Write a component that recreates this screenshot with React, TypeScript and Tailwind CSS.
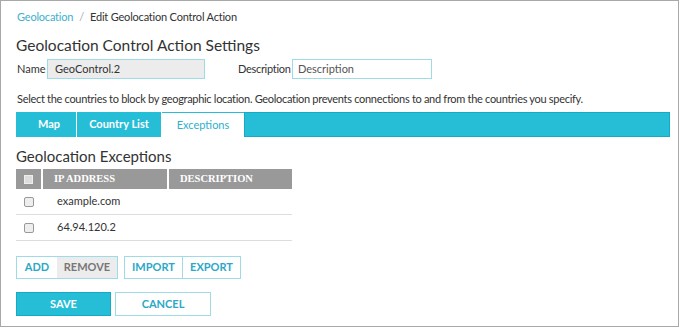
export default function App() {
  const rows = ['example.com', '64.94.120.2'];
  const serif = { fontFamily: '"Liberation Serif", serif' };

  return (
    <div className="w-[680px] h-[328px] bg-white" style={{ fontFamily: 'Lato, sans-serif' }}>
      <div className="w-[679px] h-[327px] border border-[#a8a8a8] pl-[15px] pt-[8px] text-[#333]">
        <div className="flex items-center gap-[6px] text-[11px] leading-[16px] ml-[1px] tracking-[-0.2px]">
          <span className="text-[#3cb0cc]">Geolocation</span>
          <span className="text-[#aaa]">/</span>
          <span className="text-[#333]">Edit Geolocation Control Action</span>
        </div>

        <h1 className="mt-[10px] text-[15.5px] leading-[20px] text-[#333]">Geolocation Control Action Settings</h1>

        <div className="mt-[4px] flex items-center text-[11px]">
          <span className="ml-[1px] w-[30px]">Name</span>
          <div className="w-[158px] h-[20px] bg-[#ececec] border border-[#9fdbe7] flex items-center pl-[7px]">
            GeoControl.2
          </div>
          <span className="ml-[33px] w-[54px] tracking-[-0.3px]">Description</span>
          <div className="w-[140px] h-[20px] bg-white border border-[#9fdbe7] flex items-center pl-[5px] text-[#555]">
            Description
          </div>
        </div>

        <p className="mt-[12px] text-[11px] leading-[16px] ml-[1px] tracking-[-0.3px]">
          Select the countries to block by geographic location. Geolocation prevents connections to and from the countries you specify.
        </p>

        <div className="mt-[5px] flex w-[654px] h-[25px] bg-[#26bdd7]">
          <div className="w-[61px] flex items-center justify-center text-white text-[11px] font-bold border-r border-white pl-[6px]">Map</div>
          <div className="w-[85px] flex items-center justify-center text-white text-[11px] font-bold border-r border-white">Country List</div>
          <div className="w-[82px] flex items-center justify-center bg-white text-[#2eb0cc] text-[11px] border-t border-[#26bdd7]">Exceptions</div>
          <div className="flex-1 border border-[#14abc6]" />
        </div>

        <h2 className="mt-[9px] text-[15px] leading-[20px] text-[#333]">Geolocation Exceptions</h2>

        <div className="mt-[3px] w-[276px]">
          <div className="flex h-[20px] gap-[2px]">
            <div className="w-[25px] bg-[#999] flex items-center justify-center">
              <div className="w-[9px] h-[9px] bg-[#ddd] border border-[#eee]" />
            </div>
            <div className="w-[124px] bg-[#999] flex items-center pl-[11px] text-white text-[10.5px] font-bold" style={serif}>
              IP ADDRESS
            </div>
            <div className="flex-1 bg-[#999] flex items-center pl-[11px] text-white text-[10.5px] font-bold" style={serif}>
              DESCRIPTION
            </div>
          </div>
          {rows.map((r) => (
            <div key={r} className="flex items-center h-[26px] border-b border-[#ddd] text-[11px]">
              <div className="w-[25px] flex justify-center pt-[1px]">
                <div className="w-[10px] h-[10px] rounded-[2px] border border-[#999] bg-[#eee]" />
              </div>
              <span className="ml-[16px]">{r}</span>
            </div>
          ))}
        </div>

        <div className="mt-[15px] flex gap-[6px] text-[11px] font-bold text-[#2aa8c6]">
          <div className="flex h-[23px] border border-[#9fdbe7]">
            <div className="w-[40px] flex items-center justify-center">ADD</div>
            <div className="w-[60px] flex items-center justify-center bg-[#ececec] text-[#777]">REMOVE</div>
          </div>
          <div className="flex h-[23px] border border-[#9fdbe7]">
            <div className="w-[58px] flex items-center justify-center border-r border-[#9fdbe7]">IMPORT</div>
            <div className="w-[57px] flex items-center justify-center">EXPORT</div>
          </div>
        </div>

        <div className="mt-[13px] flex gap-[4px] text-[11px] font-bold">
          <div className="w-[95px] h-[24px] bg-[#26bdd7] border border-[#14abc6] text-white flex items-center justify-center">SAVE</div>
          <div className="w-[96px] h-[24px] bg-white border border-[#9fdbe7] text-[#2aa8c6] flex items-center justify-center">CANCEL</div>
        </div>
      </div>
    </div>
  );
}
